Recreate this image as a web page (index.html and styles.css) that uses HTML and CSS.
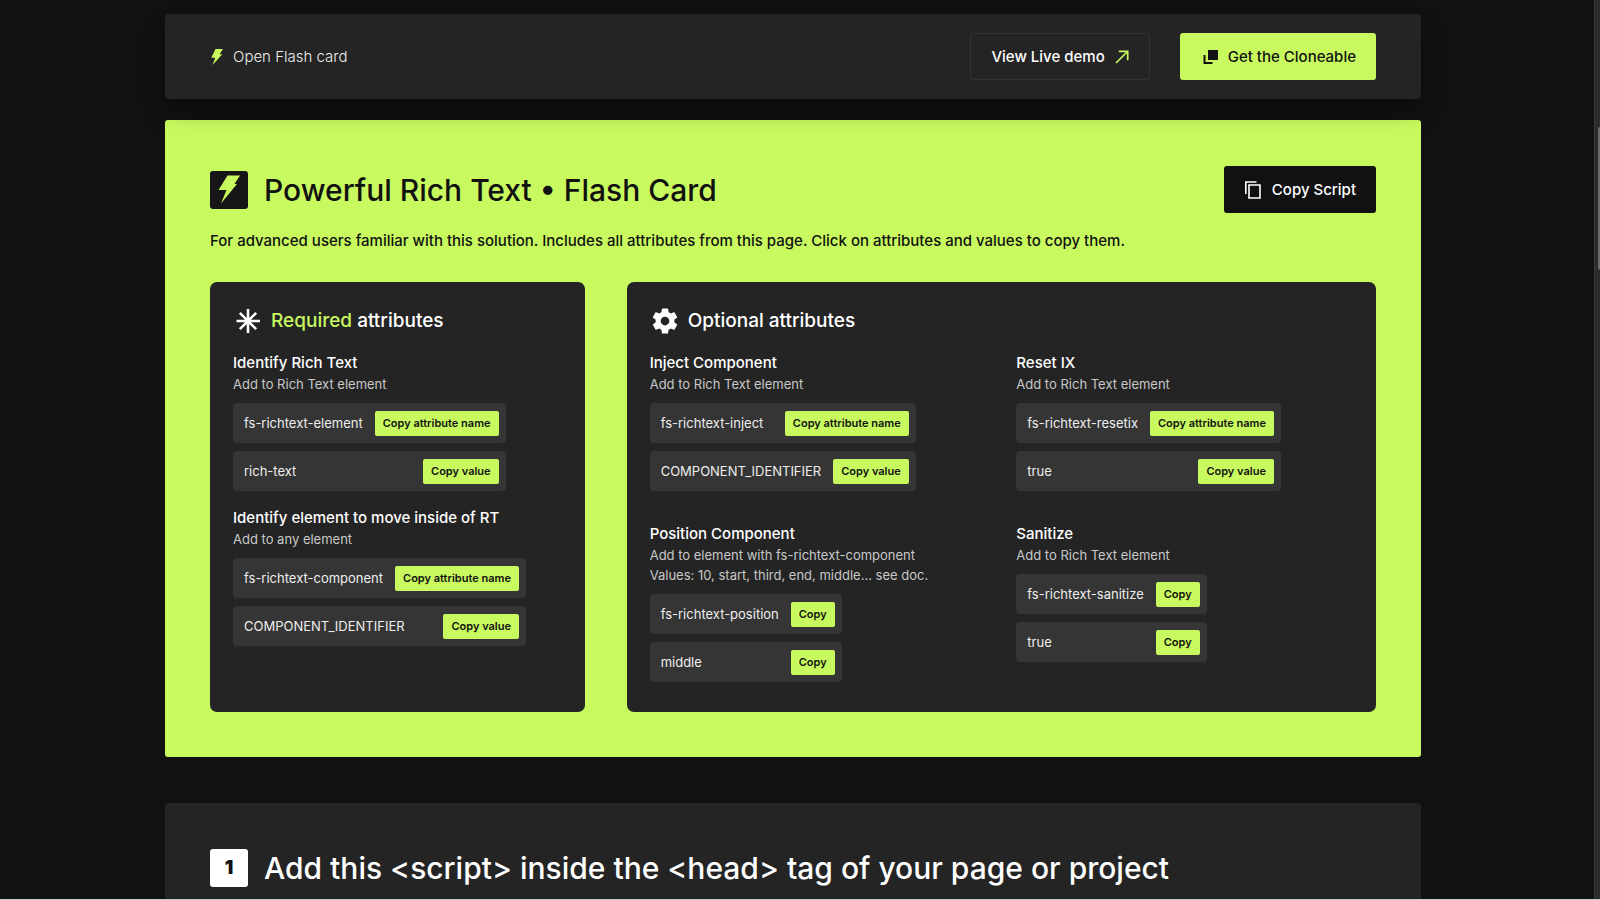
FILE: index.html
```
<!DOCTYPE html>
<html lang="en">

<head>
    <meta charset="UTF-8">
    <meta name="viewport" content="width=device-width, initial-scale=1.0">
    <title>Powerful Rich Text</title>
    <link rel="stylesheet" href="styles.css">
</head>

<body>
    <div class="page">
        <header class="topbar">
            <a href="#flash-card" class="open-link">
                <svg width="12" height="16" viewBox="0 0 12 16"><path d="M4.500 0H12L8.500 5.200H11.300L1.600 16L4.200 8.800H0.300Z" fill="#c8fa5f"/></svg>
                <span>Open Flash card</span>
            </a>
            <div class="topbar-actions">
                <a href="#demo" class="btn btn-outline">
                    <span>View Live demo</span>
                    <svg width="14" height="14" viewBox="0 0 14 14" fill="none" stroke="#c8fa5f" stroke-width="1.700"><path d="M1 13L12.500 1.500M3.800 1.300H12.700V10.200"/></svg>
                </a>
                <a href="#clone" class="btn btn-green">
                    <svg width="16" height="16" viewBox="0 0 16 16"><path d="M6 1H16V11H6Z" fill="#111"/><path d="M1.500 6H3.500V13H10.500V15H1.500Z" fill="#111"/></svg>
                    <span>Get the Cloneable</span>
                </a>
            </div>
        </header>

        <section class="flash" id="flash-card">
            <div class="section-head">
                <div class="section-title">
                    <span class="badge badge-dark">
                        <svg width="38" height="38" viewBox="0 0 38 38"><path d="M17.500 4.500H30L24.500 13H27L11 32.500L16.500 19H8.500Z" fill="#c8fa5f"/></svg>
                    </span>
                    <h2>Powerful Rich Text • Flash Card</h2>
                </div>
                <button type="button" class="btn btn-dark">
                    <svg width="18" height="18" viewBox="0 0 18 18" fill="none" stroke="#fff" stroke-width="1.600"><path d="M5 4H16V17H5Z"/><path d="M1.800 13V1H12.500"/></svg>
                    <span>Copy Script</span>
                </button>
            </div>
            <p class="lead">For advanced users familiar with this solution. Includes all attributes from this page. Click on attributes and values to copy them.</p>

            <div class="cards">
                <div class="card">
                    <h3>
                        <svg width="30" height="30" viewBox="0 0 30 30" stroke="#fff" stroke-width="2.600"><path d="M15 3V27M3.500 15H27M6.800 6.800L23.200 23.200M23.200 6.800L6.800 23.200"/></svg>
                        <span><em>Required</em> attributes</span>
                    </h3>
                    <div class="attrs">
                        <div class="attr">
                            <h4>Identify Rich Text</h4>
                            <p>Add to Rich Text element</p>
                            <div class="rows">
                                <div class="row"><span>fs-richtext-element</span><button type="button" class="copy">Copy attribute name</button></div>
                                <div class="row"><span>rich-text</span><button type="button" class="copy">Copy value</button></div>
                            </div>
                        </div>
                        <div class="attr">
                            <h4>Identify element to move inside of RT</h4>
                            <p>Add to any element</p>
                            <div class="rows">
                                <div class="row"><span>fs-richtext-component</span><button type="button" class="copy">Copy attribute name</button></div>
                                <div class="row"><span>COMPONENT_IDENTIFIER</span><button type="button" class="copy">Copy value</button></div>
                            </div>
                        </div>
                    </div>
                </div>

                <div class="card">
                    <h3>
                        <svg width="30" height="30" viewBox="0 0 24 24"><path fill="#fff" d="M19.430 12.980c.040-.320.070-.640.070-.980s-.030-.660-.070-.980l2.110-1.650c.190-.150.240-.420.120-.640l-2-3.460c-.120-.220-.390-.300-.610-.220l-2.490 1c-.520-.400-1.080-.730-1.690-.980l-.380-2.650C14.460 2.180 14.250 2 14 2h-4c-.250 0-.460.180-.490.420l-.380 2.650c-.610.250-1.170.590-1.690.980l-2.490-1c-.230-.090-.490 0-.610.220l-2 3.460c-.130.220-.070.490.120.640l2.110 1.650c-.040.320-.070.650-.070.980s.030.660.070.980l-2.110 1.650c-.190.150-.240.420-.120.640l2 3.460c.120.220.390.300.610.220l2.490-1c.520.400 1.080.730 1.690.980l.380 2.650c.030.240.240.420.490.420h4c.250 0 .460-.180.490-.420l.380-2.650c.610-.250 1.170-.590 1.690-.980l2.490 1c.230.090.490 0 .610-.220l2-3.460c.120-.220.070-.490-.120-.640l-2.110-1.650zM12 15.500c-1.930 0-3.500-1.570-3.500-3.500s1.570-3.500 3.500-3.500 3.500 1.570 3.500 3.500-1.570 3.500-3.500 3.500z"/></svg>
                        <span>Optional attributes</span>
                    </h3>
                    <div class="attrs attrs-two">
                        <div class="attr">
                            <h4>Inject Component</h4>
                            <p>Add to Rich Text element</p>
                            <div class="rows">
                                <div class="row"><span>fs-richtext-inject</span><button type="button" class="copy">Copy attribute name</button></div>
                                <div class="row"><span>COMPONENT_IDENTIFIER</span><button type="button" class="copy">Copy value</button></div>
                            </div>
                        </div>
                        <div class="attr">
                            <h4>Reset IX</h4>
                            <p>Add to Rich Text element</p>
                            <div class="rows">
                                <div class="row"><span>fs-richtext-resetix</span><button type="button" class="copy">Copy attribute name</button></div>
                                <div class="row"><span>true</span><button type="button" class="copy">Copy value</button></div>
                            </div>
                        </div>
                        <div class="attr">
                            <h4>Position Component</h4>
                            <p>Add to element with fs-richtext-component<br>Values: 10, start, third, end, middle... see doc.</p>
                            <div class="rows">
                                <div class="row"><span>fs-richtext-position</span><button type="button" class="copy">Copy</button></div>
                                <div class="row"><span>middle</span><button type="button" class="copy">Copy</button></div>
                            </div>
                        </div>
                        <div class="attr">
                            <h4>Sanitize</h4>
                            <p>Add to Rich Text element</p>
                            <div class="rows">
                                <div class="row"><span>fs-richtext-sanitize</span><button type="button" class="copy">Copy</button></div>
                                <div class="row"><span>true</span><button type="button" class="copy">Copy</button></div>
                            </div>
                        </div>
                    </div>
                </div>
            </div>
        </section>

        <section class="step">
            <div class="section-title">
                <span class="badge badge-light">1</span>
                <h2>Add this &lt;script&gt; inside the &lt;head&gt; tag of your page or project</h2>
            </div>
        </section>
    </div>
    <div class="scrollbar"><div class="thumb"></div></div>
</body>

</html>
```

FILE: styles.css
```
* {
    margin: 0;
    padding: 0;
    box-sizing: border-box;
}

body {
    display: flex;
    height: 100vh;
    overflow: hidden;
    background: #111;
    border-bottom: 1px solid #c5cbc6;
    color: #fff;
    font-family: Inter, "Liberation Sans", sans-serif;
    font-size: 16px;
    line-height: 22px;
}

a {
    color: inherit;
    text-decoration: none;
}

button {
    font: inherit;
    border: none;
    cursor: pointer;
}

svg {
    display: block;
    flex-shrink: 0;
}

.page {
    flex: 1;
    padding: 14px 173px 0 165px;
}

.topbar {
    position: relative;
    display: flex;
    justify-content: space-between;
    align-items: center;
    padding: 19px 45px;
    margin-bottom: 21px;
    background: #242424;
    border-radius: 4px;
    box-shadow: 0 14px 24px -6px rgba(0, 0, 0, 0.5);
}

.open-link {
    display: flex;
    align-items: center;
    gap: 10px;
    padding-left: 1px;
    font-weight: 300;
    font-size: 15px;
    color: #eee;
}

.topbar-actions {
    display: flex;
    gap: 30px;
}

.btn {
    display: flex;
    align-items: center;
    gap: 10px;
    height: 47px;
    padding: 0 20px;
    border-radius: 3px;
    font-size: 15px;
    font-weight: 500;
    white-space: nowrap;
}

.btn-outline {
    border: 1px solid #333;
}

.btn-green {
    padding-left: 22px;
    background: #c8fa5f;
    color: #111;
}

.btn-dark {
    background: #111;
    color: #fff;
}

.flash {
    padding: 46px 45px 45px;
    margin-bottom: 46px;
    background: #c8fa5f;
    color: #111;
    border-radius: 3px;
}

.section-head {
    display: flex;
    justify-content: space-between;
    align-items: center;
}

.section-title {
    display: flex;
    align-items: center;
    gap: 16px;
}

.section-title h2 {
    font-size: 30px;
    line-height: 38px;
    font-weight: 500;
    white-space: nowrap;
}

.badge {
    display: flex;
    align-items: center;
    justify-content: center;
    width: 38px;
    height: 38px;
    border-radius: 3px;
    flex-shrink: 0;
}

.badge-dark {
    background: #161616;
}

.badge-light {
    background: #fff;
    color: #111;
    font-size: 19px;
    font-weight: 900;
}

.lead {
    margin: 17px 0 30px;
    font-size: 15px;
    font-weight: 500;
}

.cards {
    display: grid;
    grid-template-columns: 1fr 2fr;
    gap: 42px;
}

.card {
    min-width: 0;
    padding: 23px 23px 30px;
    background: #242424;
    color: #fff;
    border-radius: 7px;
}

.card h3 {
    display: flex;
    align-items: center;
    gap: 8px;
    height: 31px;
    margin-bottom: 16px;
    font-size: 19px;
    font-weight: 500;
}

.card em {
    font-style: normal;
    color: #c8fa5f;
}

.attrs {
    display: grid;
    gap: 16px 30px;
    align-content: start;
}

.attrs-two {
    grid-template-columns: 1fr 1fr;
    row-gap: 32px;
}

.attr h4 {
    font-size: 15px;
    font-weight: 500;
}

.attr p {
    margin-bottom: 9px;
    font-size: 13px;
    line-height: 20px;
    font-weight: 400;
    color: #c8c8c8;
    white-space: nowrap;
}

.rows {
    display: grid;
    gap: 8px;
    width: fit-content;
}

.row {
    display: flex;
    justify-content: space-between;
    align-items: center;
    gap: 12px;
    height: 40px;
    padding: 0 7px 0 11px;
    background: #353535;
    border-radius: 4px;
    color: #eee;
    font-size: 13px;
    font-weight: 400;
}

.copy {
    height: 25px;
    padding: 0 8px;
    background: #c8fa5f;
    color: #111;
    border-radius: 2px;
    font-size: 11px;
    line-height: 25px;
    font-weight: 600;
}

.step {
    padding: 46px 45px;
    background: #242424;
    border-radius: 4px;
}

.scrollbar {
    width: 6px;
    padding: 127px 0 0 3px;
    background: #2b2b2b;
    border-left: 1px solid #3a3a3a;
}

.thumb {
    height: 143px;
    background: #6b6b6b;
    border-radius: 3px 0 0 3px;
}
```
